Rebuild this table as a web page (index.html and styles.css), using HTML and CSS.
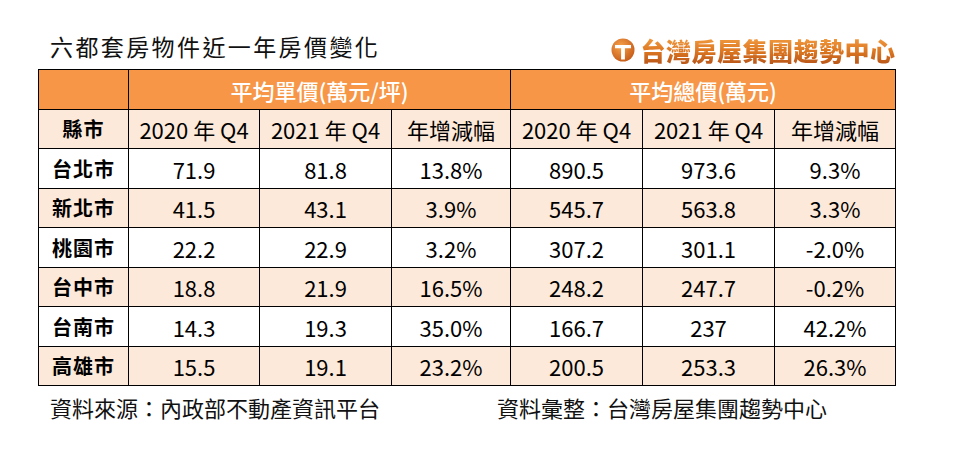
FILE: index.html
```html
<!DOCTYPE html>
<html lang="zh-Hant">
<head>
<meta charset="utf-8">
<link rel="stylesheet" href="styles.css">
</head>
<body>
<div class="page">
  <div class="top">
    <h1 class="title">六都套房物件近一年房價變化</h1>
    <div class="logo">
      <svg class="logo-icon" width="24" height="24" viewBox="0 0 24 24">
        <defs>
          <radialGradient id="lg" cx="40%" cy="35%" r="70%">
            <stop offset="0" stop-color="#f7a24a"/>
            <stop offset="1" stop-color="#c45a18"/>
          </radialGradient>
        </defs>
        <circle cx="12" cy="12" r="11.5" fill="url(#lg)"/>
        <path d="M4 7 H20 V10.3 H13.9 V21.5 H10.1 V10.3 H4 Z" fill="#fff"/>
      </svg>
      <span class="logo-text">台灣房屋集團趨勢中心</span>
    </div>
  </div>
  <table class="grid">
    <colgroup>
      <col class="c0"><col class="c1"><col class="c2"><col class="c3"><col class="c4"><col class="c5"><col class="c6">
    </colgroup>
    <tr class="h1">
      <th></th>
      <th colspan="3">平均單價(萬元/坪)</th>
      <th colspan="3">平均總價(萬元)</th>
    </tr>
    <tr class="h2 alt">
      <th class="city">縣市</th>
      <td>2020 年 Q4</td><td>2021 年 Q4</td><td>年增減幅</td>
      <td>2020 年 Q4</td><td>2021 年 Q4</td><td>年增減幅</td>
    </tr>
    <tr class="r tall">
      <th class="city">台北市</th>
      <td>71.9</td><td>81.8</td><td>13.8%</td><td>890.5</td><td>973.6</td><td>9.3%</td>
    </tr>
    <tr class="r alt">
      <th class="city">新北市</th>
      <td>41.5</td><td>43.1</td><td>3.9%</td><td>545.7</td><td>563.8</td><td>3.3%</td>
    </tr>
    <tr class="r tall">
      <th class="city">桃園市</th>
      <td>22.2</td><td>22.9</td><td>3.2%</td><td>307.2</td><td>301.1</td><td>-2.0%</td>
    </tr>
    <tr class="r alt">
      <th class="city">台中市</th>
      <td>18.8</td><td>21.9</td><td>16.5%</td><td>248.2</td><td>247.7</td><td>-0.2%</td>
    </tr>
    <tr class="r tall">
      <th class="city">台南市</th>
      <td>14.3</td><td>19.3</td><td>35.0%</td><td>166.7</td><td>237</td><td>42.2%</td>
    </tr>
    <tr class="r alt">
      <th class="city">高雄市</th>
      <td>15.5</td><td>19.1</td><td>23.2%</td><td>200.5</td><td>253.3</td><td>26.3%</td>
    </tr>
  </table>
  <div class="foot">
    <span class="src">資料來源：內政部不動產資訊平台</span>
    <span class="src2">資料彙整：台灣房屋集團趨勢中心</span>
  </div>
</div>
</body>
</html>
```

FILE: styles.css
```css
html, body {
  margin: 0;
  padding: 0;
  background: #fff;
}
body {
  font-family: "Noto Sans CJK TC", "Noto Sans", sans-serif;
  color: #000;
}
.page {
  width: 956px;
  height: 451px;
  padding: 0 0 0 38px;
  box-sizing: border-box;
}
.top {
  height: 69px;
  width: 857px;
  display: flex;
  align-items: flex-end;
  justify-content: space-between;
  box-sizing: border-box;
  padding: 0 0 5px 12px;
}
.title {
  margin: 0;
  font-size: 23px;
  font-weight: 400;
  line-height: 30px;
  letter-spacing: 2.4px;
  color: #111;
  margin-bottom: 3px;
}
.logo {
  display: flex;
  align-items: center;
  gap: 5px;
}
.logo-icon {
  display: block;
}
.logo-text {
  font-size: 25px;
  font-weight: 900;
  line-height: 28px;
  letter-spacing: 0.5px;
  margin-right: -0.5px;
  background: linear-gradient(180deg, #f3a045 0%, #dc7621 55%, #b9571a 100%);
  -webkit-background-clip: text;
  background-clip: text;
  color: transparent;
}
.grid {
  border-collapse: collapse;
  table-layout: fixed;
  width: 857px;
}
.c0 { width: 90px; }
.c1 { width: 131px; }
.c2 { width: 132px; }
.c3 { width: 119px; }
.c4 { width: 132px; }
.c5 { width: 132px; }
.c6 { width: 121px; }
.grid th, .grid td {
  border: 1px solid #000;
  padding: 0;
  text-align: center;
  font-size: 22px;
  line-height: 26px;
  font-weight: 400;
}
.h1 th {
  background: #f79646;
  color: #fff;
  height: 39px;
  font-weight: 500;
}
.h2 td, .h2 th { height: 38px; }
.r.tall th, .r.tall td { height: 39px; }
.r.alt th, .r.alt td { height: 38px; }
.alt th, .alt td { background: #fde9d9; }
.tall th, .tall td { background: #fff; }
.city {
  font-size: 20px !important;
  font-weight: 700 !important;
  letter-spacing: 1px;
}
.foot {
  display: flex;
  padding: 8px 0 0 12px;
  font-size: 22px;
  line-height: 26px;
  color: #111;
}
.src { width: 447px; }
```
